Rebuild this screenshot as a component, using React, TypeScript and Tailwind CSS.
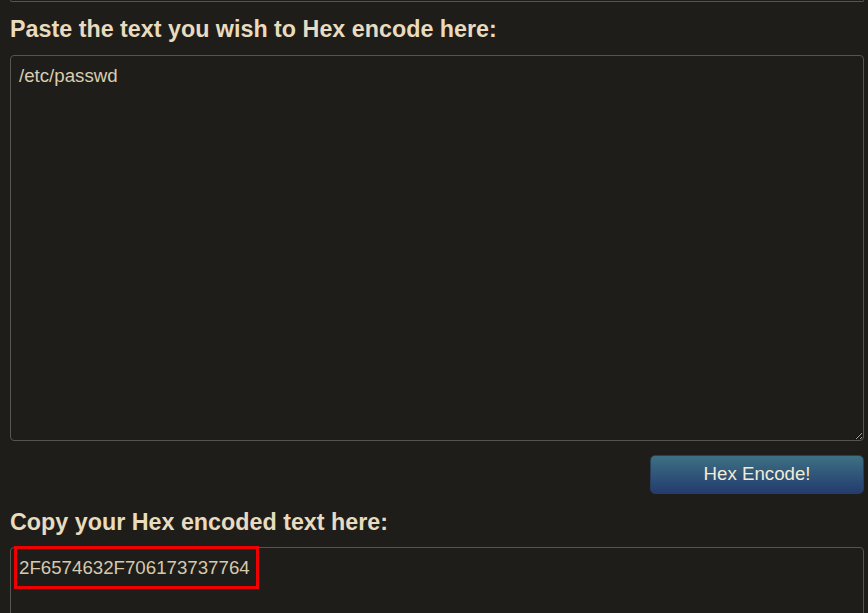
import React from "react";

export default function App() {
  return (
    <div className="h-screen w-full overflow-hidden bg-[#1e1d19] pl-[10px] pr-[4px] font-['Liberation_Sans',Arial,sans-serif]">
      <div className="h-[2px] rounded-b-[4px] border-x border-b border-[#57554f]" />
      <h2 className="mt-[13px] text-[23.3px] font-bold leading-[28px] text-[#e8dbbf]">
        Paste the text you wish to Hex encode here:
      </h2>
      <textarea
        className="mt-[12px] block h-[386px] w-full resize-y rounded-[4px] border border-[#57554f] bg-[#1e1d19] px-[8px] pt-[9px] pb-[7px] text-[18.7px] leading-[22px] text-[#dacdb1] outline-none font-['Liberation_Sans',Arial,sans-serif]"
        defaultValue="/etc/passwd"
        readOnly
      />
      <div className="mt-[14px] flex justify-end">
        <button className="h-[39px] w-[214px] rounded-[5px] border border-[#2b3d5c] bg-gradient-to-b from-[#3e7083] to-[#243c6e] text-[18.7px] text-[#f1ecd6] font-['Liberation_Sans',Arial,sans-serif]">
          Hex Encode!
        </button>
      </div>
      <h2 className="mt-[14px] text-[23.3px] font-bold leading-[28px] text-[#e8dbbf]">
        Copy your Hex encoded text here:
      </h2>
      <div className="relative mt-[11px]">
        <textarea
          className="block h-[200px] w-full resize-y rounded-[4px] border border-[#57554f] bg-[#1e1d19] px-[8px] pt-[9px] pb-[7px] text-[18.7px] leading-[22px] text-[#d6c9ad] outline-none font-['Liberation_Sans',Arial,sans-serif]"
          defaultValue="2F6574632F706173737764"
          readOnly
        />
        <div className="pointer-events-none absolute left-[4px] top-[-1px] h-[43px] w-[245px] border-[3px] border-[#f00000]" />
      </div>
    </div>
  );
}
